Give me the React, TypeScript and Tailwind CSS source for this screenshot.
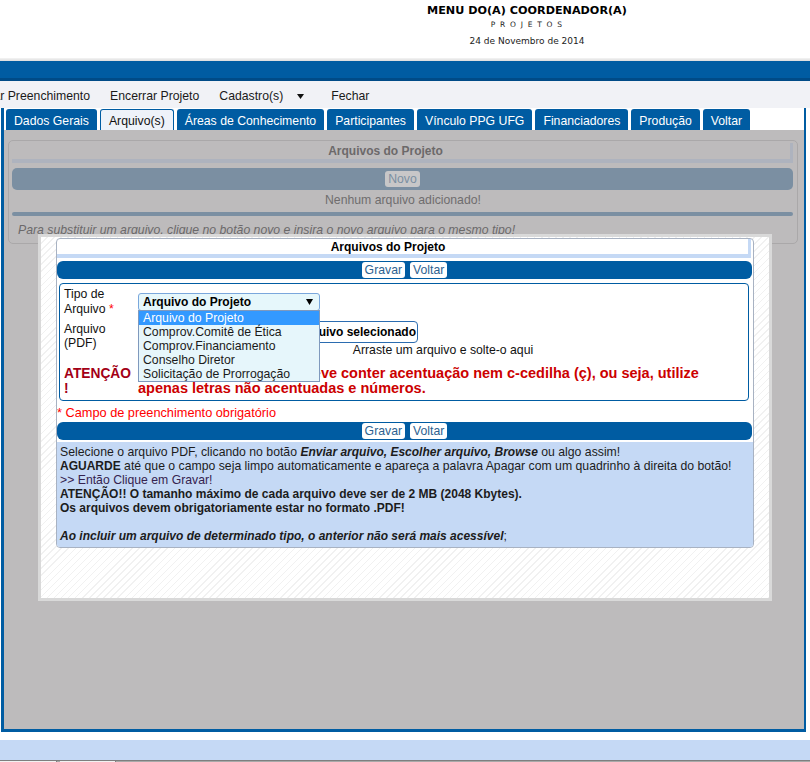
import React from "react";

const tabs = [
  "Dados Gerais",
  "Arquivo(s)",
  "Áreas de Conhecimento",
  "Participantes",
  "Vínculo PPG UFG",
  "Financiadores",
  "Produção",
  "Voltar",
];

const options = [
  "Arquivo do Projeto",
  "Comprov.Comitê de Ética",
  "Comprov.Financiamento",
  "Conselho Diretor",
  "Solicitação de Prorrogação",
];

function ActionBar() {
  return (
    <div className="flex h-[18px] items-center justify-center gap-[5px] rounded-[6px] bg-[#005ca2]">
      <span className="h-[16px] rounded-[3px] bg-white px-[3px] leading-[16px] text-[#2d6290]">Gravar</span>
      <span className="h-[16px] rounded-[3px] bg-white px-[3px] leading-[16px] text-[#2d6290]">Voltar</span>
    </div>
  );
}

export default function App() {
  return (
    <div className="min-h-[762px] w-full bg-white font-['Liberation_Sans',Arial,sans-serif] text-[12.25px] text-[#111]">
      {/* Header */}
      <header className="h-[58px] pl-[244px] text-center font-['DejaVu_Sans',Verdana,sans-serif] text-black">
        <div className="pt-[3px] text-[11.2px] font-bold leading-[16px]">MENU DO(A) COORDENADOR(A)</div>
        <div className="text-[7.5px] leading-[12px] tracking-[1.2px] text-[#222]">P R O J E T O S</div>
        <div className="text-[9px] leading-[20px] text-[#222]">24 de Novembro de 2014</div>
      </header>
      <div className="h-[3px] bg-[linear-gradient(#f4f4f4,#dcdcdc)]" />
      <div className="h-[17px] bg-[#005ca2]" />
      <div className="h-[3px] bg-[#004b87]" />

      {/* Menu */}
      <nav className="flex h-[27px] items-center gap-5 overflow-hidden whitespace-nowrap bg-[#f1f2f6] pt-[3px] text-[#1a1a1a]">
        <span className="-ml-[42px]">Finalizar Preenchimento</span>
        <span>Encerrar Projeto</span>
        <span className="flex items-center">
          Cadastro(s)
          <svg className="ml-[14px] mr-[7px]" width="7" height="5" viewBox="0 0 7 5">
            <path d="M0 0H7L3.5 5Z" fill="#111" />
          </svg>
        </span>
        <span>Fechar</span>
      </nav>

      {/* Tabs container */}
      <div className="ml-[1px] w-[805px] border-b-[3px] border-l-[3px] border-r-[2px] border-[#005ca2] bg-white">
        <div className="flex h-[22px] items-end gap-[3px] pl-[2px]">
          {tabs.map((t) =>
            t === "Arquivo(s)" ? (
              <div
                key={t}
                className="flex h-[21px] items-center rounded-t-[3px] border border-b-0 border-[#005ca2] bg-[#eef2f9] px-2 pt-[3px] text-[#111]"
              >
                {t}
              </div>
            ) : (
              <div
                key={t}
                className="flex h-[21px] items-center rounded-t-[3px] bg-[#005ca2] px-2 pt-[3px] text-white"
              >
                {t}
              </div>
            )
          )}
        </div>

        {/* Tab panel (under modal overlay) */}
        <div className="relative h-[599px] bg-[#bdbbbc] pl-[4px] pt-[10px]">
          <div className="h-[104px] w-[790px] rounded-[5px] border border-[#aaa8a9]">
            <div className="ml-[3px] mr-[4px] mt-[2px] flex h-[20px] items-center justify-center border-b-[4px] border-r-[3px] border-[#aeb3be] pr-[31px] text-[12px] font-bold text-[#6c696a]">
              Arquivos do Projeto
            </div>
            <div className="ml-[3px] mr-[4px] mt-[5px] flex h-[22px] items-center justify-center rounded-[5px] bg-[#7b8fa2]">
              <span className="h-[16px] rounded-[3px] bg-[#c8c7c8] px-[3px] leading-[16px] text-[#7b8fa2]">Novo</span>
            </div>
            <div className="h-[20px] text-center leading-[20px] text-[#6f6d6e]">Nenhum arquivo adicionado!</div>
            <div className="ml-[3px] mr-[4px] mt-[2px] h-[4px] rounded-full bg-[#7b8fa2]" />
            <div className="mt-[6px] pl-[9px] italic leading-[16px] text-[#6b696a]">
              Para substituir um arquivo, clique no botão novo e insira o novo arquivo para o mesmo tipo!
            </div>
          </div>

          {/* Modal */}
          <div className="absolute left-[34px] top-[104px] h-[367px] w-[734px] border-[3px] border-[#d9d9d9] bg-[repeating-linear-gradient(135deg,#ffffff_0px,#ffffff_4px,#f1f1f1_4px,#f1f1f1_5px)] pl-[15px] pt-[1px]">
            <div className="flex h-[310px] w-[698px] flex-col overflow-hidden rounded-[4px] border border-[#a8b2c2] bg-white">
              <div className="mr-[2px] flex h-[19px] shrink-0 items-center justify-center border-b-[4px] border-r-[3px] border-[#c5d9f5] pr-[29px] text-[12px] font-bold text-black">
                Arquivos do Projeto
              </div>
              <div className="mr-[1px] mt-[3px] shrink-0">
                <ActionBar />
              </div>

              {/* Form */}
              <div className="ml-[2px] mr-[4px] mt-[4px] h-[118px] shrink-0 rounded-[4px] border border-[#005ca2] pl-[4px] pt-[2px]">
                <div className="flex h-[31px] items-center">
                  <div className="w-[74px] shrink-0 leading-[15px]">
                    Tipo de
                    <br />
                    Arquivo <span className="text-[#ff0000]">*</span>
                  </div>
                  <div className="relative z-10 flex h-[18px] w-[182px] items-center rounded-[3px] border border-[#7aa7dc] bg-[#e6f7fb] pl-[4px] pr-[6px] text-[12px] font-bold text-black">
                    Arquivo do Projeto
                    <svg className="ml-auto" width="7" height="6" viewBox="0 0 7 6">
                      <path d="M0 0H7L3.5 6Z" fill="#000" />
                    </svg>
                    <div className="absolute left-[-1px] top-[16px] w-[182px] border border-[#7f99bd] bg-[#e6f6fb] text-[12.25px] font-normal">
                      {options.map((o, i) =>
                        i === 0 ? (
                          <div key={o} className="h-[14px] bg-[#3399ff] pl-[4px] leading-[14px] text-white">
                            {o}
                          </div>
                        ) : (
                          <div key={o} className="h-[14px] pl-[4px] leading-[14px] text-[#1a1a1a]">
                            {o}
                          </div>
                        )
                      )}
                    </div>
                  </div>
                </div>

                <div className="mt-[4px] flex items-start">
                  <div className="w-[74px] shrink-0 pt-[1px] leading-[14px]">
                    Arquivo
                    <br />
                    (PDF)
                  </div>
                  <div className="flex flex-1 flex-col">
                    <div className="flex h-[22px] w-[280px] items-center justify-between overflow-hidden whitespace-nowrap rounded-[4px] border border-[#2b6cb0] pr-[1px] text-[12px] font-bold text-black">
                      <span className="pl-[4px]">Escolher arquivo</span>
                      <span>Nenhum arquivo selecionado</span>
                    </div>
                    <div className="text-center leading-[14px]">Arraste um arquivo e solte-o aqui</div>
                  </div>
                </div>

                <div className="mt-[9px] flex items-start">
                  <div className="w-[74px] shrink-0 text-[13.75px] font-bold leading-[15px] text-[#a30016]">ATENÇÃO !</div>
                  <div className="w-[590px] text-[14.5px] font-bold leading-[15px] text-[#cc0000]">
                    O nome do arquivo não deve conter acentuação nem c-cedilha (ç), ou seja, utilize apenas letras não acentuadas e números.
                  </div>
                </div>
              </div>

              <div className="mt-[4px] shrink-0 text-[12.75px] leading-[16px] text-[#ff0000]">* Campo de preenchimento obrigatório</div>
              <div className="mr-[1px] mt-[1px] shrink-0">
                <ActionBar />
              </div>

              {/* Info */}
              <div className="mt-[2px] flex-1 bg-[#c5d9f5] pl-[3px] pt-[3px] leading-[14px] text-[#1c1c1c]">
                <div>
                  Selecione o arquivo PDF, clicando no botão{" "}
                  <b className="text-[12px] italic">Enviar arquivo, Escolher arquivo, Browse</b> ou algo assim!
                </div>
                <div>
                  <b className="text-[12px]">AGUARDE</b> até que o campo seja limpo automaticamente e apareça a palavra Apagar com um quadrinho à direita do botão!
                </div>
                <div className="text-[#35234f]">&gt;&gt; Então Clique em Gravar!</div>
                <div className="text-[12px] font-bold">ATENÇÃO!! O tamanho máximo de cada arquivo deve ser de 2 MB (2048 Kbytes).</div>
                <div className="text-[12px] font-bold">Os arquivos devem obrigatoriamente estar no formato .PDF!</div>
                <div className="h-[14px]" />
                <div>
                  <b className="text-[12px] italic">Ao incluir um arquivo de determinado tipo, o anterior não será mais acessível</b>;
                </div>
              </div>
            </div>
          </div>
        </div>
      </div>

      <div className="h-[8px]" />
      <div className="h-[20px] bg-[#c5d9f5]" />
      <div className="flex h-[10px] border-t border-[#7f7f7f] bg-[#a9a9a9]">
        <div className="w-[57px] border-r border-[#7f7f7f] bg-[#f2f2f2]" />
        <div className="ml-[3px] w-[56px] border-r border-[#7f7f7f] bg-[#f2f2f2]" />
      </div>
    </div>
  );
}
